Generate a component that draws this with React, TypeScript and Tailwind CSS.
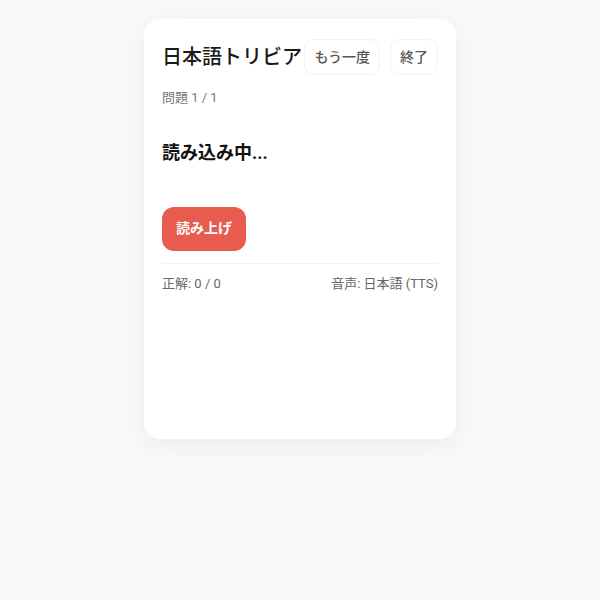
export default function App() {
  return (
    <div
      className="min-h-[600px] w-full bg-[#f9f9f9] pt-[19px]"
      style={{ fontFamily: 'Roboto, "Noto Sans CJK JP", sans-serif' }}
    >
      <div className="mx-auto h-[420px] w-[312px] rounded-2xl bg-white px-[18px] pt-5 shadow-[0_6px_24px_rgba(0,0,0,0.06)]">
        {/* header */}
        <div className="flex items-center justify-between">
          <h1 className="whitespace-nowrap text-[20px] font-medium text-[#1a1a1a]">日本語トリビア</h1>
          <div className="flex shrink-0 gap-[10px]">
            <button className="h-9 whitespace-nowrap rounded-[10px] border border-[#f2f2f2] bg-white px-[9px] text-[14px] font-medium text-[#555]">
              もう一度
            </button>
            <button className="h-9 whitespace-nowrap rounded-[10px] border border-[#f2f2f2] bg-white px-[9px] text-[14px] font-medium text-[#555]">
              終了
            </button>
          </div>
        </div>

        <p className="mt-[13px] text-[13px] text-[#777]">問題 1 / 1</p>

        <h2 className="mt-[31px] text-[18px] font-bold text-[#111]">読み込み中...</h2>

        <button className="mt-[41px] h-11 rounded-xl bg-[#e85c50] px-[14px] text-[14px] font-bold text-white">
          読み上げ
        </button>

        <div className="mt-3 border-t border-[#f3f3f3] pt-[10px]">
          <div className="flex justify-between text-[13px] text-[#666]">
            <span>正解: 0 / 0</span>
            <span>音声: 日本語 (TTS)</span>
          </div>
        </div>
      </div>
    </div>
  );
}
